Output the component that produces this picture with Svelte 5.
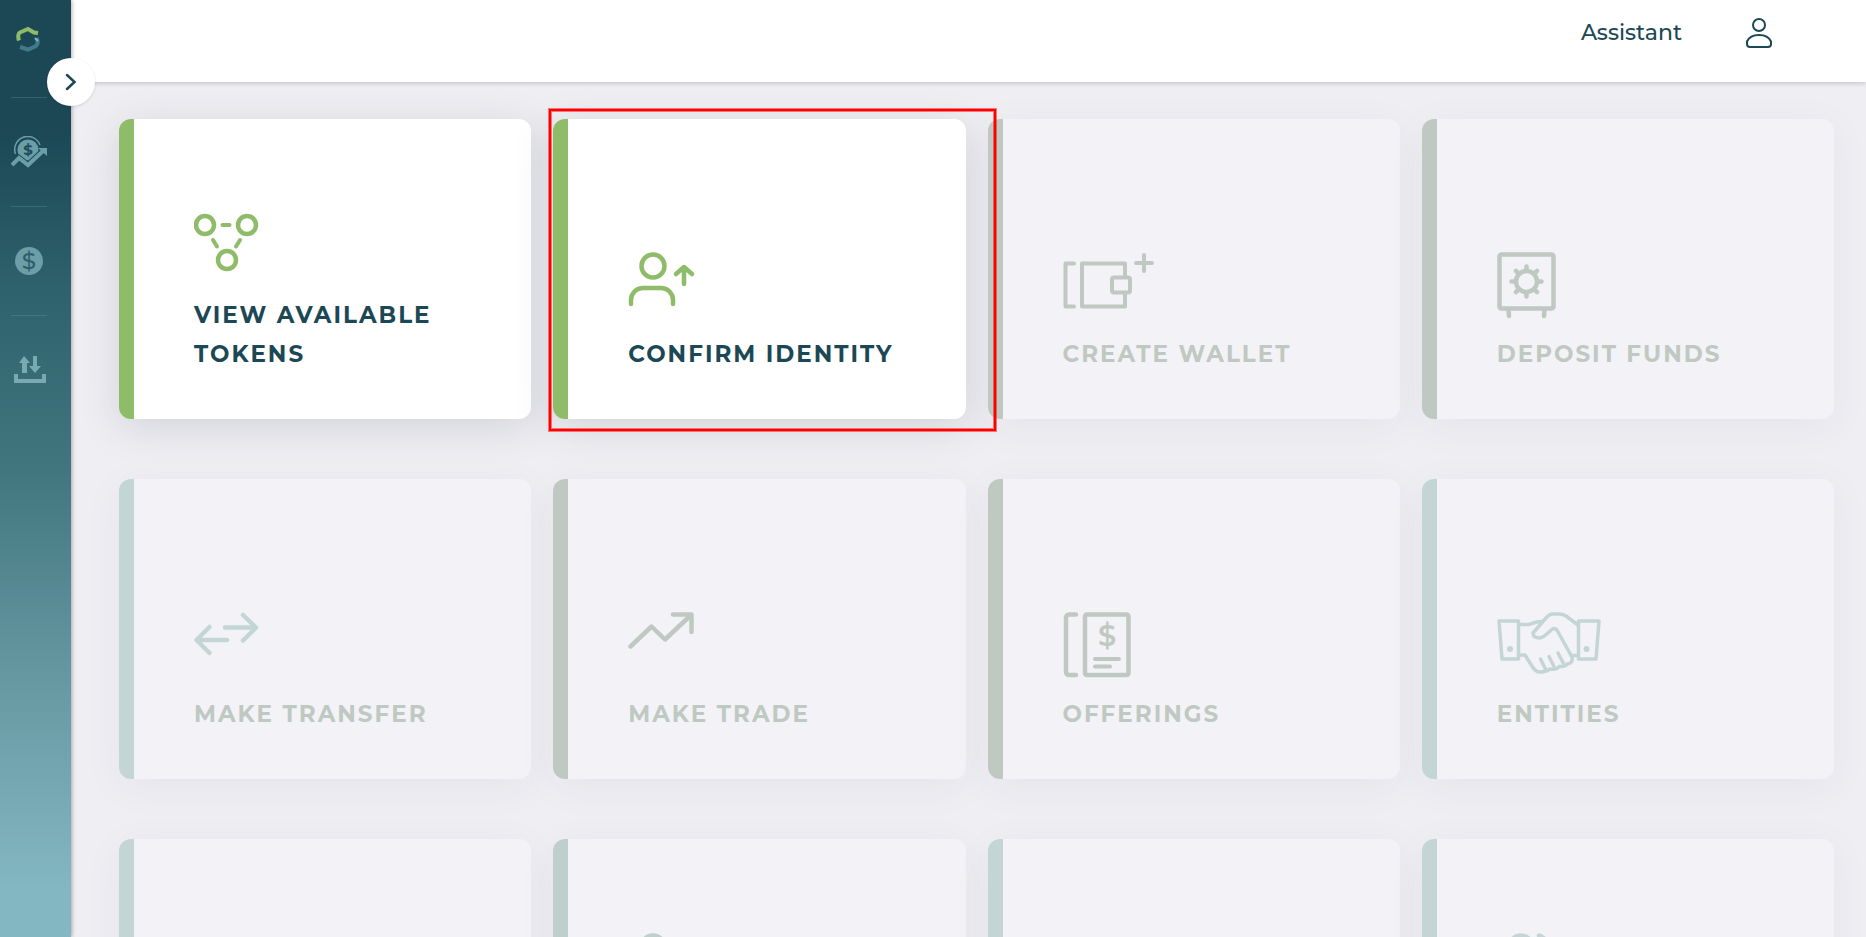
<script lang="ts">
    type Card = {
        title: string;
        icon: string;
        tone: string;
        active?: boolean;
        marked?: boolean;
        tall?: boolean;
    };

    const cards: Card[] = [
        { title: 'View available tokens', icon: 'tokens', tone: 'green', active: true },
        { title: 'Confirm identity', icon: 'identity', tone: 'green', active: true, marked: true },
        { title: 'Create wallet', icon: 'wallet', tone: 'sage' },
        { title: 'Deposit funds', icon: 'safe', tone: 'sage' },
        { title: 'Make transfer', icon: 'transfer', tone: 'teal' },
        { title: 'Make trade', icon: 'trade', tone: 'sage' },
        { title: 'Offerings', icon: 'offerings', tone: 'sage' },
        { title: 'Entities', icon: 'entities', tone: 'teal' },
        { title: '', icon: '', tone: 'teal' },
        { title: '', icon: 'person', tone: 'mint', tall: true },
        { title: '', icon: '', tone: 'teal' },
        { title: '', icon: 'people', tone: 'teal', tall: true }
    ];

    const teeth = [0, 45, 90, 135, 180, 225, 270, 315];

    let expanded = false;
</script>

<div class="layout">
    <aside class="sidebar">
        <a class="logo" href="#home" aria-label="Home">
            <svg width="24" height="26" viewBox="0 0 24 26" fill="none" stroke-width="4">
                <path d="M3 14.500C1.500 10 2.500 7 4 6.500L12 3l6 3.500 4 .5" stroke="#8fbc69" />
                <path d="M20.500 12c2 4 1 7-1.500 8.500l-7 3-8-2.500" stroke="#417a89" />
                <path d="M19 12l3 3" stroke="#83b7c1" stroke-width="2" />
            </svg>
        </a>
        <nav>
            <a href="#investments" aria-label="Investments">
                <svg width="36" height="32" viewBox="0 0 36 32" fill="none">
                    <circle cx="17" cy="14" r="10.500" fill="currentColor" />
                    <path d="M4.500 18A13 13 0 1 1 29 9" stroke="currentColor" stroke-width="1.500" />
                    <text class="dark" x="17" y="19" font-size="15" text-anchor="middle">$</text>
                    <path class="edge" d="M1 29L8 22L17 29L33 14" stroke-width="6" />
                    <path d="M1 29L8 22L17 29L32 15" stroke="currentColor" stroke-width="4" />
                    <path d="M27 12h9v8z" fill="currentColor" />
                </svg>
            </a>
            <a href="#funds" aria-label="Funds">
                <svg width="36" height="28" viewBox="0 0 36 28">
                    <circle cx="18" cy="14" r="14" fill="currentColor" />
                    <text class="dark thin" x="18" y="22" font-size="23" text-anchor="middle">$</text>
                </svg>
            </a>
            <a class="light" href="#transfers" aria-label="Transfers">
                <svg width="36" height="28" viewBox="0 0 36 28" fill="currentColor">
                    <path d="M13 0l6 7h-3v10h-5V7H8z" />
                    <path d="M24 17l-6-7h4V0h4v10h4z" />
                    <path d="M3 18h4v5h24v-5h4v9H3z" />
                </svg>
            </a>
        </nav>
        <button class="toggle" aria-label="Toggle menu" on:click={() => (expanded = !expanded)}>
            <svg width="12" height="18" viewBox="0 0 12 18" fill="none" stroke="#1c4856" stroke-width="2.500">
                <path d="M2 2L9.500 9L2 16" stroke-linecap="round" />
            </svg>
        </button>
    </aside>

    <div class="page">
        <header>
            <a class="assistant" href="#assistant">Assistant</a>
            <button class="profile" aria-label="Profile">
                <svg width="26" height="30" viewBox="0 0 26 30" fill="none" stroke="#1c4856" stroke-width="2">
                    <circle cx="13" cy="7" r="6" />
                    <path d="M1 24.500v-1C3 19 8 17 13 17s10 2 12 6.500v2.500a3 3 0 0 1-3 3H4a3 3 0 0 1-3-3z" />
                </svg>
            </button>
        </header>

        <main>
            {#each cards as card}
                <a class="card {card.tone}" class:active={card.active} class:tall={card.tall} href="#{card.icon}">
                    <span class="icon">
                        {#if card.icon === 'tokens'}
                            <svg width="66" height="60">
                                <circle cx="11" cy="12" r="9" />
                                <circle cx="53" cy="12" r="9" />
                                <circle cx="33" cy="47" r="9" />
                                <path class="dash" d="M28.500 12h7M19 27l4 6.500M46 27l-4 6.500" />
                            </svg>
                        {:else if card.icon === 'identity'}
                            <svg width="68" height="56">
                                <circle cx="25" cy="14" r="11.500" />
                                <path d="M3 52v-4a12 12 0 0 1 12-12h18a12 12 0 0 1 12 12v4" />
                                <path d="M56 32V15M48 22l8-7l8 7" />
                            </svg>
                        {:else if card.icon === 'wallet'}
                            <svg class="medium" width="94" height="58">
                                <path d="M11 11.500H2.500V54.500H11" />
                                <path d="M62 24V11.500H19V54.500H62V42" />
                                <rect x="49" y="25.500" width="18" height="15" rx="2" />
                                <path d="M81 3v16M73 11h16" />
                            </svg>
                        {:else if card.icon === 'safe'}
                            <svg width="60" height="70">
                                <rect x="2.500" y="2.500" width="54" height="54" rx="2" />
                                <circle cx="29.500" cy="29.500" r="10.500" />
                                {#each teeth as angle}
                                    <path d="M29.500 17v-2.500" transform="rotate({angle} 29.500 29.500)" />
                                {/each}
                                <path d="M11.500 58l.5 6M47.500 58l-.5 6" />
                            </svg>
                        {:else if card.icon === 'transfer'}
                            <svg width="66" height="44">
                                <path d="M31 15.500H62M49 3L62 15.500L49 28.500" />
                                <path d="M33 28H3M15.500 15L2.500 28L15.500 41" />
                            </svg>
                        {:else if card.icon === 'trade'}
                            <svg width="66" height="38">
                                <path d="M2.500 34.500L23.500 14.500L37 27.500L63 3" />
                                <path d="M45 2.500H63.500V20" />
                            </svg>
                        {:else if card.icon === 'offerings'}
                            <svg width="68" height="66">
                                <path d="M13 2.500H6a3 3 0 0 0-3 3v54.500a3 3 0 0 0 3 3h7" />
                                <rect x="22" y="2.500" width="43.500" height="60.500" rx="2" />
                                <text x="44" y="34" font-size="29" text-anchor="middle">$</text>
                                <path class="dash" d="M32 47h24M32 54.500h15" />
                            </svg>
                        {:else if card.icon === 'entities'}
                            <svg class="fine" width="104" height="62">
                                <path d="M2 9H21.500V47H5z" />
                                <path d="M81.500 9H102L99 47H81.500z" />
                                <circle class="solid" cx="13" cy="37" r="3" />
                                <circle class="solid" cx="89.500" cy="37" r="3" />
                                <path d="M22 12.500H31C35 12.500 36 9.500 45 9.500" />
                                <path d="M81 13L69 4Q66 2 62 2H56Q52 2 49 6L36 21Q36 26 43 26C49 25 54 16.500 57 16.500Q59 16.500 60.500 19L75 45C76 49 74 52 70 52Q69 55 62 54.500Q60 58 53 57Q49 60 42 60Q38 59 35.500 55L28 43H22" />
                                <path d="M43.500 47l5 10M52 44.500l5 10M61 41l5.500 10.500M74 43.500h7" />
                            </svg>
                        {:else if card.icon === 'person'}
                            <svg width="68" height="56">
                                <circle cx="25" cy="14" r="11.500" />
                                <path d="M3 52v-4a12 12 0 0 1 12-12h18a12 12 0 0 1 12 12v4" />
                            </svg>
                        {:else if card.icon === 'people'}
                            <svg width="68" height="56">
                                <circle cx="24" cy="14" r="11.500" />
                                <path d="M42 2.500a12 12 0 0 1 0 23M3 52v-4a12 12 0 0 1 12-12h18a12 12 0 0 1 12 12v4" />
                            </svg>
                        {/if}
                    </span>
                    <span class="title">{card.title}</span>
                    {#if card.marked}
                        <span class="marker"></span>
                    {/if}
                </a>
            {/each}
        </main>
    </div>
</div>

<style>
    :global(body) {
        margin: 0;
        background-color: #efeef3;
    }

    .layout {
        display: flex;
        height: 100vh;
        overflow: hidden;
        font-family: Montserrat, Inter, sans-serif;
        color: #1c4856;
    }

    .sidebar {
        position: relative;
        z-index: 2;
        flex: 0 0 71px;
        background: linear-gradient(#1c4856 14%, #30656f 33%, #41767f 50%, #6799a3 73%, #83b7c1 95%);
        box-shadow: 1px 0 4px rgba(0, 0, 0, 0.3);
    }

    .logo {
        display: flex;
        align-items: center;
        justify-content: center;
        width: 56px;
        height: 78px;
    }

    nav {
        display: flex;
        flex-direction: column;
        margin: 19px 24px 0 11px;
    }

    nav a {
        display: flex;
        align-items: center;
        height: 108px;
        border-top: 1px solid rgba(108, 158, 168, 0.3);
        color: #6c9ea8;
    }

    nav a.light {
        color: #78aab1;
    }

    nav .dark {
        fill: #1f4e5b;
        font-weight: 700;
    }

    nav .thin {
        fill: #2b5f6b;
        font-weight: 500;
    }

    nav .edge {
        stroke: #1f4d5a;
    }

    .toggle {
        position: absolute;
        top: 58px;
        right: -24px;
        display: flex;
        align-items: center;
        justify-content: center;
        width: 48px;
        height: 48px;
        padding: 0;
        border: 0;
        border-radius: 50%;
        background-color: #fff;
        box-shadow: 0 1px 3px rgba(0, 0, 0, 0.12);
        cursor: pointer;
    }

    .page {
        flex: 1;
        display: flex;
        flex-direction: column;
        min-width: 0;
    }

    header {
        z-index: 1;
        flex: 0 0 82px;
        box-sizing: border-box;
        display: flex;
        align-items: center;
        justify-content: flex-end;
        gap: 64px;
        padding: 0 94px 16px 0;
        background-color: #fff;
        box-shadow: 0 2px 4px rgba(0, 0, 0, 0.15);
    }

    .assistant {
        font-size: 22px;
        font-weight: 500;
        line-height: 24px;
        color: #1c4856;
        text-decoration: none;
    }

    .profile {
        display: flex;
        padding: 0;
        border: 0;
        background: none;
        cursor: pointer;
    }

    main {
        display: grid;
        grid-template-columns: repeat(4, 1fr);
        grid-auto-rows: 300px;
        gap: 60px 22px;
        padding: 37px 32px 37px 48px;
    }

    .card {
        --tone: #bfc9c2;
        position: relative;
        display: flex;
        flex-direction: column;
        justify-content: flex-end;
        box-sizing: border-box;
        padding: 0 60px 45px;
        border-left: 15px solid var(--tone);
        border-radius: 12px;
        background-color: #f3f2f7;
        box-shadow: 0 8px 40px rgba(40, 60, 70, 0.05);
        color: #bfc9c2;
        text-decoration: none;
    }

    .card.active {
        background-color: #fff;
        box-shadow: 0 8px 40px rgba(40, 60, 70, 0.15);
        color: #1c4856;
    }

    .card.green {
        --tone: #8fbc69;
    }

    .card.teal {
        --tone: #c3d6d5;
    }

    .card.mint {
        --tone: #bfcfcb;
    }

    .icon {
        height: 83px;
    }

    .icon svg {
        display: block;
        fill: none;
        stroke: var(--tone);
        stroke-width: 4.5;
        stroke-linecap: round;
        stroke-linejoin: round;
    }

    .icon svg.medium,
    .icon .dash {
        stroke-width: 4;
    }

    .icon svg.fine {
        stroke-width: 3.5;
    }

    .icon .solid,
    .icon text {
        fill: var(--tone);
        stroke: none;
        font-weight: 600;
    }

    .title {
        min-height: 39px;
        font-size: 23px;
        font-weight: 700;
        line-height: 39px;
        letter-spacing: 2px;
        text-transform: uppercase;
    }

    .tall .title {
        min-height: 78px;
    }

    /* highlight frame drawn over the neighbouring cards */
    .marker {
        position: absolute;
        z-index: 1;
        top: -10px;
        right: -30px;
        bottom: -12px;
        left: -19px;
        border: 2px solid #f00;
        box-shadow: 0 0 0 1px rgba(255, 0, 0, 0.5), inset 0 0 0 1px rgba(255, 0, 0, 0.5);
        pointer-events: none;
    }
</style>
